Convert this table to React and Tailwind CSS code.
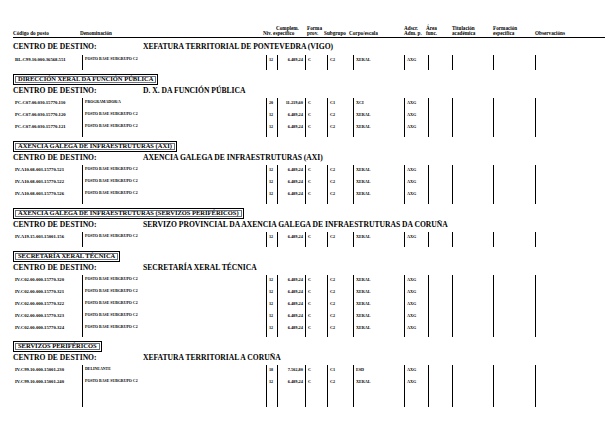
import React from "react";

const groups = [
  {
    box: null,
    centro: "XEFATURA TERRITORIAL DE PONTEVEDRA (VIGO)",
    rows: [["BL.C99.10.000.36568.551", "POSTO BASE SUBGRUPO C2", "12", "6.489,24", "C", "C2", "XERAL", "AXG"]],
    filler: 3,
  },
  {
    box: "DIRECCIÓN XERAL DA FUNCIÓN PÚBLICA",
    centro: "D. X. DA FUNCIÓN PÚBLICA",
    rows: [
      ["PC.C07.00.030.15770.110", "PROGRAMADOR/A", "20", "11.219,60", "C", "C1", "XCI", "AXG"],
      ["PC.C07.00.030.15770.120", "POSTO BASE SUBGRUPO C2", "12", "6.489,24", "C", "C2", "XERAL", "AXG"],
      ["PC.C07.00.030.15770.121", "POSTO BASE SUBGRUPO C2", "12", "6.489,24", "C", "C2", "XERAL", "AXG"],
    ],
    filler: 3,
  },
  {
    box: "AXENCIA GALEGA DE INFRAESTRUTURAS (AXI)",
    centro: "AXENCIA GALEGA DE INFRAESTRUTURAS (AXI)",
    rows: [
      ["IV.A10.08.003.15770.521", "POSTO BASE SUBGRUPO C2", "12", "6.489,24", "C", "C2", "XERAL", "AXG"],
      ["IV.A10.08.003.15770.522", "POSTO BASE SUBGRUPO C2", "12", "6.489,24", "C", "C2", "XERAL", "AXG"],
      ["IV.A10.08.003.15770.526", "POSTO BASE SUBGRUPO C2", "12", "6.489,24", "C", "C2", "XERAL", "AXG"],
    ],
    filler: 3,
  },
  {
    box: "AXENCIA GALEGA DE INFRAESTRUTURAS (SERVIZOS PERIFÉRICOS)",
    centro: "SERVIZO PROVINCIAL DA AXENCIA GALEGA DE INFRAESTRUTURAS DA CORUÑA",
    rows: [["IV.A19.15.003.15001.156", "POSTO BASE SUBGRUPO C2", "12", "6.489,24", "C", "C2", "XERAL", "AXG"]],
    filler: 3,
  },
  {
    box: "SECRETARÍA XERAL TÉCNICA",
    centro: "SECRETARÍA XERAL TÉCNICA",
    rows: [
      ["IV.C02.00.000.15770.320", "POSTO BASE SUBGRUPO C2", "12", "6.489,24", "C", "C2", "XERAL", "AXG"],
      ["IV.C02.00.000.15770.321", "POSTO BASE SUBGRUPO C2", "12", "6.489,24", "C", "C2", "XERAL", "AXG"],
      ["IV.C02.00.000.15770.322", "POSTO BASE SUBGRUPO C2", "12", "6.489,24", "C", "C2", "XERAL", "AXG"],
      ["IV.C02.00.000.15770.323", "POSTO BASE SUBGRUPO C2", "12", "6.489,24", "C", "C2", "XERAL", "AXG"],
      ["IV.C02.00.000.15770.324", "POSTO BASE SUBGRUPO C2", "12", "6.489,24", "C", "C2", "XERAL", "AXG"],
    ],
    filler: 2,
  },
  {
    box: "SERVIZOS PERIFÉRICOS",
    centro: "XEFATURA TERRITORIAL A CORUÑA",
    rows: [
      ["IV.C99.10.000.15001.230", "DELINEANTE", "18", "7.502,80", "C", "C1", "ESD", "AXG"],
      ["IV.C99.10.000.15001.240", "POSTO BASE SUBGRUPO C2", "12", "6.489,24", "C", "C2", "XERAL", "AXG"],
    ],
    filler: 18,
  },
];

const GRID = "grid grid-cols-[69px_184px_11px_28px_22px_26px_51px_24px_24px_41px_42px_70px]";
const cell = "border-l border-black pl-[2px] pt-[3px]";

function Row({ r }) {
  return (
    <div className={`${GRID} h-[12px] text-[4.2px] leading-none font-bold whitespace-nowrap`}>
      <div className="pt-[3px] pl-[2px] text-[4.7px]">{r[0]}</div>
      <div className={`${cell} text-[3.9px]`}>{r[1]}</div>
      <div className={cell}>{r[2]}</div>
      <div className="border-l border-black pr-[2px] pt-[3px] text-right text-[4.4px]">{r[3]}</div>
      <div className={cell}>{r[4]}</div>
      <div className={cell}>{r[5]}</div>
      <div className={cell}>{r[6]}</div>
      <div className={cell}>{r[7]}</div>
      <div className={cell}></div>
      <div className={cell}></div>
      <div className={cell}></div>
      <div className={cell}></div>
    </div>
  );
}

function Filler({ h }) {
  return (
    <div className={GRID} style={{ height: h }}>
      <div></div>
      {Array.from({ length: 11 }).map((_, i) => (
        <div key={i} className="border-l border-black"></div>
      ))}
    </div>
  );
}

function Header() {
  const two = (a, b) => (
    <div className="flex flex-col">
      <span>{a}</span>
      <span>{b}</span>
    </div>
  );
  return (
    <div className="grid grid-cols-[67px_183px_44px_17px_25px_55px_22px_26px_41px_42px_70px] items-end border-b border-black pt-[26px] pb-[1px] text-[5.2px] leading-[5px] font-bold whitespace-nowrap">
      <div>Código do posto</div>
      <div>Denominación</div>
      <div className="flex flex-col">
        <span className="pl-[13px]">Complem.</span>
        <span>Niv. específico</span>
      </div>
      {two("Forma", "prov.")}
      <div>Subgrupo</div>
      <div>Corpo/escala</div>
      {two("Adscr.", "Adm. p.")}
      {two("Área", "func.")}
      {two("Titulación", "académica")}
      {two("Formación", "específica")}
      <div>Observacións</div>
    </div>
  );
}

export default function App() {
  return (
    <div className="w-[615px] h-[435px] bg-white text-black overflow-hidden font-['Liberation_Serif','DejaVu_Serif',serif]">
      <div className="ml-[13px] w-[592px]">
        <Header />
        {groups.map((g, gi) => (
          <div key={gi}>
            {g.box && (
              <div className="mt-[4px] w-fit border border-black p-px">
                <div className="border border-gray-500 px-[2px] h-[7px] flex items-center text-[6.5px] leading-none font-bold whitespace-nowrap">
                  {g.box}
                </div>
              </div>
            )}
            <div className={`flex h-[11px] items-center text-[7.6px] leading-none font-bold whitespace-nowrap ${gi === 0 ? "mt-[3px]" : ""}`}>
              <div className="w-[130px]">CENTRO DE DESTINO:</div>
              <div>{g.centro}</div>
            </div>
            <div className={gi === 0 ? "mt-[3px]" : "mt-[2px]"}>
              {g.rows.map((r, ri) => (
                <Row key={ri} r={r} />
              ))}
              <Filler h={g.filler} />
            </div>
          </div>
        ))}
      </div>
    </div>
  );
}
